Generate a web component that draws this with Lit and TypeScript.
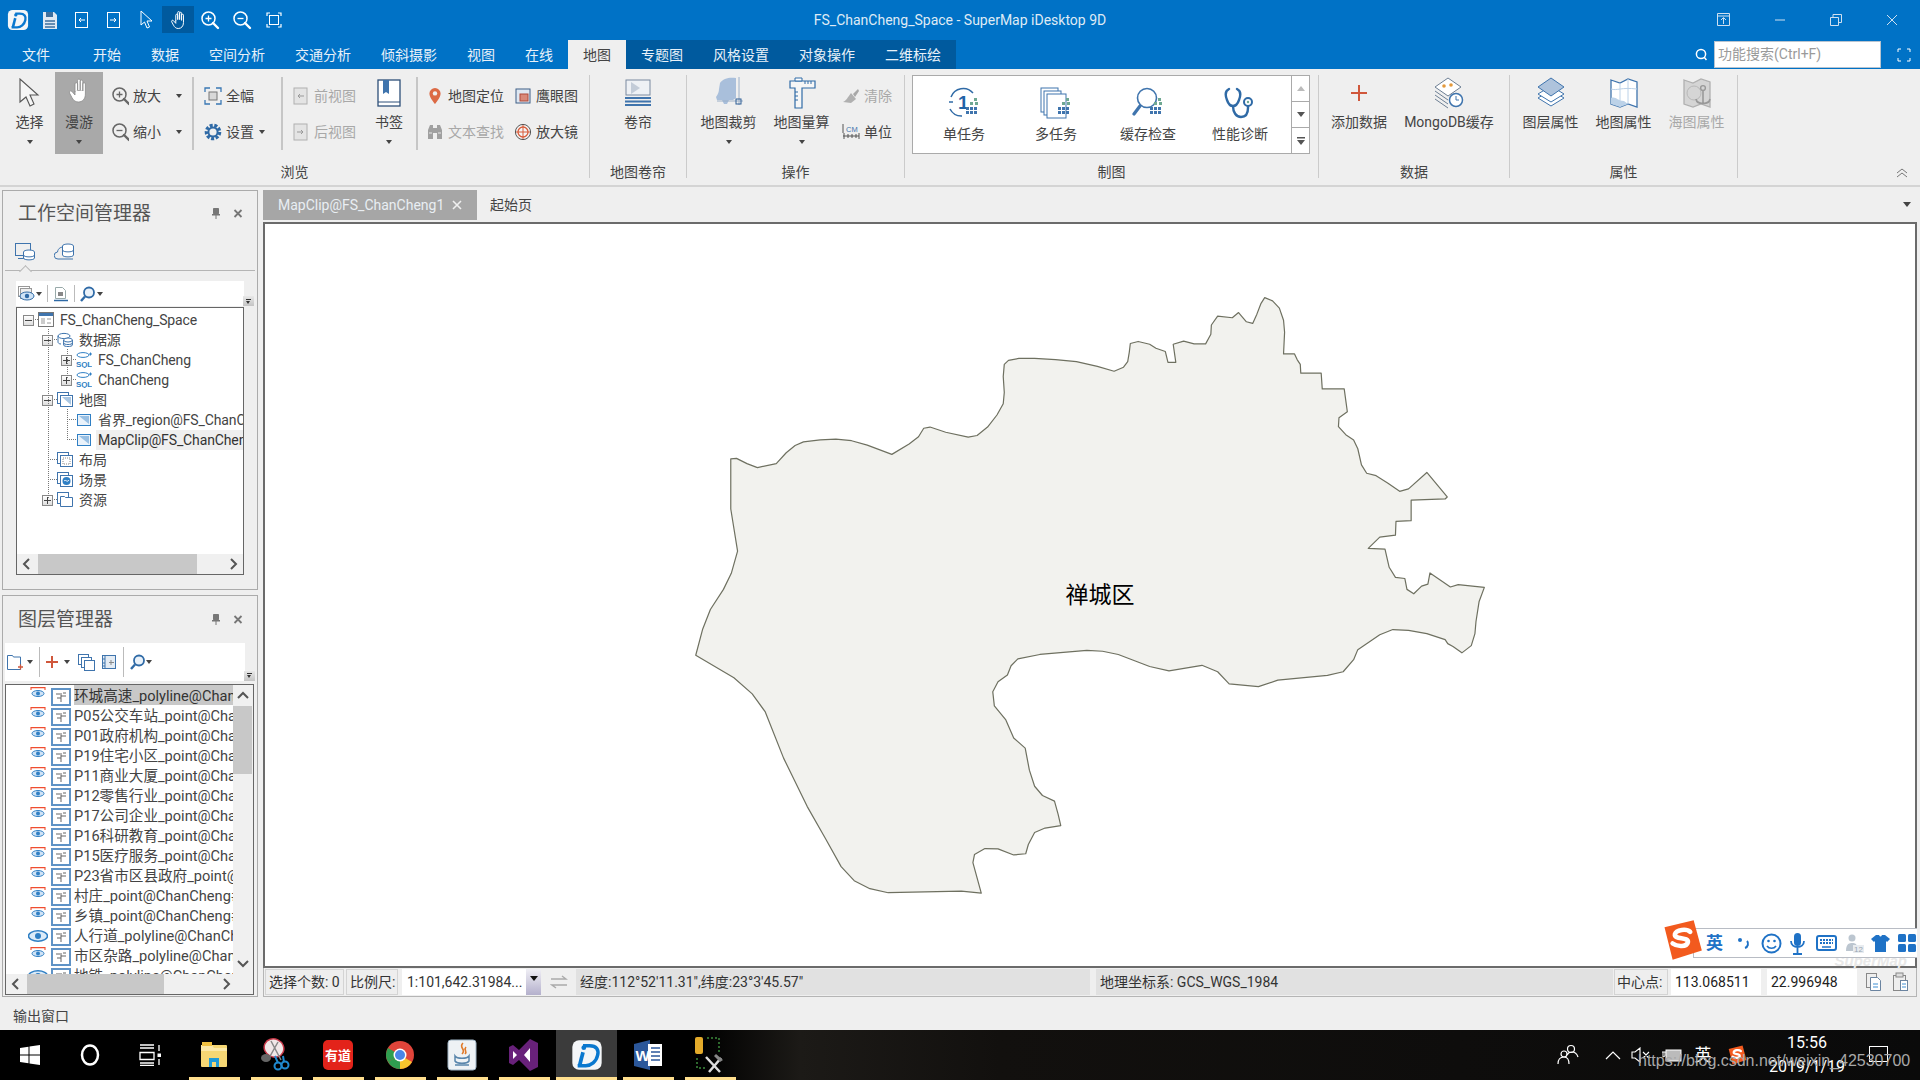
import { LitElement, html, css, svg } from "lit";
import { customElement } from "lit/decorators.js";

const ic = (w: number, h: number, body: unknown) =>
  html`<svg class="ic" width=${w} height=${h} viewBox="0 0 ${w} ${h}">${body}</svg>`;

const B = "#3f74ad";
const handPath =
  "M7 15V7a1.3 1.3 0 0 1 2.6 0v6M9.6 13V3.4a1.3 1.3 0 0 1 2.6 0V13M12.2 13V4.4a1.3 1.3 0 0 1 2.6 0V14M14.8 14V7a1.3 1.3 0 0 1 2.6 0v10c0 5-3 8-7 8-3.5 0-5-2-6.5-4.5L1.5 16c-.8-1.5 1-3 2.4-1.6L7 18V14";

const lens = (c: string, kind: string, w = 20) =>
  ic(w, 20, svg`<circle cx="8.5" cy="8.5" r="6.5" fill="none" stroke=${c} stroke-width="1.5"/>
    <path d="M13 13l5 5" stroke=${c} stroke-width="2.4" stroke-linecap="round"/>
    <path d=${kind === "+" ? "M5.5 8.5h6M8.5 5.5v6" : "M5.5 8.5h6"} stroke=${c} stroke-width="1.3"/>`);

const logo = (size: number) =>
  html`<svg class="ic" width=${size} height=${size} viewBox="0 0 24 24">
    <rect x="1" y="1" width="22" height="22" rx="5" fill="#f4f6f8"/>
    <path d="M9 5h5c5 0 7 3 6 7-1 5-5 8-9 8H5" fill="none" stroke="#0a78cf" stroke-width="2.6"/>
    <path d="M9 10l-2.6 10" stroke="#0a78cf" stroke-width="2.8"/>
    <circle cx="9.6" cy="6.5" r="1.8" fill="#0a78cf"/>
  </svg>`;

const pageArrow = (dir: number) =>
  ic(18, 20, svg`<rect x="2.5" y="2.5" width="12" height="15" fill="none" stroke="#fff"/>
    <path d=${dir < 0 ? "M12 10H6M8 8l-2 2 2 2" : "M5 10h6M9 8l2 2-2 2"} fill="none" stroke="#fff"/>
    <path d=${dir < 0 ? "M0 2v16" : "M17 2v16"} stroke="#0072c6"/>`);

const dots = svg`<g fill="#3f74ad"><rect x="18" y="20" width="3" height="3"/><rect x="22" y="20" width="3" height="3"/><rect x="26" y="20" width="3" height="3"/><rect x="18" y="24" width="3" height="3"/><rect x="22" y="24" width="3" height="3"/><rect x="26" y="24" width="3" height="3"/></g>
  <g fill="#6fa892"><rect x="26" y="11" width="3" height="3"/><rect x="22" y="15" width="3" height="3"/><rect x="27" y="15" width="3" height="3"/></g>`;

const I: Record<string, () => unknown> = {
  select: () => ic(26, 30, svg`<path d="M3 1v23l6-5 4 9 4-2-4-9h8z" fill="#f6f6f6" stroke="#555" stroke-width="1.1"/>`),
  hand: () => ic(22, 32, svg`<path d=${handPath} fill="#fff" stroke="#8a8a8a" stroke-width=".8"/>`),
  full: () => ic(18, 18, svg`<path d="M1 5V1h5M12 1h5v4M17 13v4h-5M6 17H1v-4" fill="none" stroke="#3a78b4" stroke-width="1.3"/><rect x="5" y="5" width="8" height="8" fill="#d8d8d8" stroke="#777"/>`),
  gear: () => ic(18, 18, svg`<circle cx="9" cy="9" r="6.6" fill="none" stroke="#2f6aa6" stroke-width="3.4" stroke-dasharray="3 1.6"/><circle cx="9" cy="9" r="4.6" fill="none" stroke="#2f6aa6" stroke-width="2"/>`),
  prev: () => ic(16, 18, svg`<rect x="1" y="1" width="13" height="16" fill="#e4e4e4" stroke="#b0b0b0"/><path d="M11 9H5M7 7L5 9l2 2" fill="none" stroke="#999"/>`),
  next: () => ic(16, 18, svg`<rect x="1" y="1" width="13" height="16" fill="#e4e4e4" stroke="#b0b0b0"/><path d="M4 9h6M8 7l2 2-2 2" fill="none" stroke="#999"/>`),
  book: () => ic(24, 28, svg`<rect x="1" y="1" width="22" height="26" fill="#fff" stroke="#2d4f78" stroke-width="1.3"/><path d="M1 23h22" stroke="#2d4f78"/><path d="M6 1h6v14l-3-2-3 2z" fill="#3f74ad"/>`),
  pin: () => ic(14, 18, svg`<path d="M7 1a5.6 5.6 0 0 0-5.6 5.6C1.4 11 7 17 7 17s5.6-6 5.6-10.4A5.6 5.6 0 0 0 7 1z" fill="#dc6a45"/><circle cx="7" cy="6.4" r="2.2" fill="#f0f0f0"/>`),
  binoc: () => ic(18, 18, svg`<path d="M2 16V7l2-5h3v14zM11 16V2h3l2 5v9z" fill="#a0a0a0"/><rect x="7" y="5" width="4" height="5" fill="#a0a0a0"/><path d="M3 10h3M12 10h3" stroke="#e8e8e8"/>`),
  eagle: () => ic(16, 16, svg`<rect x="1" y="1" width="14" height="14" fill="#dfe8f2" stroke="#3f5f86"/><rect x="5" y="6" width="8" height="7" fill="#d8897a" stroke="#b04a3a"/>`),
  magn: () => ic(18, 18, svg`<circle cx="9" cy="9" r="7.6" fill="#f4f4f4" stroke="#555"/><circle cx="9" cy="9" r="5" fill="none" stroke="#d85c3a" stroke-width="1.3"/><path d="M9 2v14M2 9h14" stroke="#d85c3a"/>`),
  swipe: () => ic(28, 28, svg`<rect x="2" y="1" width="24" height="15" fill="#eef1f5" stroke="#7a8aa0"/><path d="M7 3l9 6-9 6z" fill="#c3ccd8"/><path d="M1 19h26M1 22.5h26M1 26h26" stroke="#3f74ad" stroke-width="2"/>`),
  clip: () => ic(28, 32, svg`<path d="M5 6C8 1 15 0 21 1v20l-3 2h-4l-2 4H9l-2-4H2l-1-3c2-3 3-5 3-8z" fill="#a9bfdb"/><path d="M24 0v28M2 24h26" stroke="#9cb0c8"/><rect x="21" y="22" width="5" height="5" fill="none" stroke="#2f5f96"/>`),
  ruler: () => ic(28, 32, svg`<path d="M2 4h25v7H14v20H7V11H2z" fill="#f6f6f6" stroke="#2f6aa6" stroke-width="1.2"/><path d="M7 1h7v3H7z" fill="#fff" stroke="#2f6aa6"/><path d="M17 4v3M20 4v3M23 4v3M7 15h3M7 19h3M7 23h3" stroke="#2f6aa6"/>`),
  broom: () => ic(18, 18, svg`<path d="M11 7l5-5 1 2-4 6z" fill="#a8a8a8"/><path d="M9 6l5 6-5 4-8-1c3-1 5-5 8-9z" fill="#b0b0b0"/>`),
  unit: () => ic(18, 18, svg`<path d="M1 13h16M2 10v6M6 11v4M10 11v4M14 11v4M17 10v6M1 1v9" stroke="#555" fill="none"/><text x="4" y="9" font-size="7.5" fill="#3f74ad" font-family="Liberation Sans">CM</text>`),
  task1: () => ic(32, 32, svg`<path d="M3 10A13 13 0 0 1 25 6M2 22a13 13 0 0 0 12 7" fill="none" stroke="#2f6aa6" stroke-width="1.5"/><path d="M1 15h4" stroke="#2f6aa6" stroke-width="1.5"/><text x="10" y="22" font-size="19" font-weight="700" fill="#1f63a8" font-family="Liberation Sans">1</text>${dots}`),
  taskn: () => ic(32, 32, svg`<rect x="1" y="1" width="17" height="24" fill="#fff" stroke="#3f74ad"/><rect x="4" y="4" width="17" height="24" fill="#fff" stroke="#3f74ad"/><rect x="7" y="7" width="19" height="24" fill="#fff" stroke="#3f74ad"/>${dots}`),
  cache: () => ic(32, 32, svg`<circle cx="15" cy="11" r="9.5" fill="#fff" stroke="#3f74ad" stroke-width="1.6"/><path d="M8 19L2 27" stroke="#3f74ad" stroke-width="3.2" stroke-linecap="round"/>${dots}`),
  steth: () => ic(32, 32, svg`<path d="M5 2C1 4 1 8 3 13c1 3 3 6 6 6s5-3 6-6c2-5 2-9-2-11" fill="none" stroke="#2f6aa6" stroke-width="2.4" stroke-linecap="round"/><path d="M9 19c0 6 3 11 8 11s7-4 7-9v-3" fill="none" stroke="#2f6aa6" stroke-width="2.4"/><circle cx="24" cy="15" r="4" fill="#fff" stroke="#2f6aa6" stroke-width="2"/><circle cx="24" cy="15" r="1.2" fill="#6fa892"/>`),
  plus: () => ic(20, 20, svg`<path d="M10 2v16M2 10h16" stroke="#d0573b" stroke-width="2"/>`),
  mongo: () => ic(30, 32, svg`<path d="M14 1l13 9-13 9L1 10z" fill="#fff" stroke="#6d7f94"/><path d="M1 14l13 9M1 18l13 9M1 22l13 9" stroke="#6d7f94"/><circle cx="10" cy="9" r="1.8" fill="#e39a3d"/><circle cx="17" cy="8" r="1.8" fill="#e39a3d"/><circle cx="22" cy="23" r="6.5" fill="#fff" stroke="#3f74ad" stroke-width="1.5"/><path d="M22 19v4h3" fill="none" stroke="#3f74ad"/>`),
  layers: () => ic(30, 32, svg`<path d="M15 21l13-8-13-8-13 8z" transform="translate(0,8)" fill="#fff" stroke="#3f74ad"/><path d="M15 21l13-8-13-8-13 8z" transform="translate(0,4)" fill="#fff" stroke="#3f74ad"/><path d="M15 19L28 10 15 1 2 10z" fill="#aec3dc" stroke="#3f74ad"/>`),
  mapp: () => ic(28, 32, svg`<path d="M1 3l9 3 8-4 9 3v25l-9-3-8 3-9-3z" fill="#fff" stroke="#3f74ad" stroke-width="1.3"/><path d="M1 21c5-2 6 3 13 3l4 3-8 3-9-3z" fill="#bcd2e8"/><path d="M10 6v24M18 2v25" stroke="#bcd2e8"/><path d="M1 12c6 2 10-2 26 0" stroke="#bcd2e8" fill="none"/>`),
  sea: () => ic(28, 32, svg`<path d="M1 3l9 3 8-4 9 3v25l-9-3-8 3-9-3z" fill="#d5d5d5" stroke="#b0b0b0" stroke-width="1.3"/><circle cx="11" cy="16" r="7" fill="none" stroke="#b8b8b8"/><circle cx="20" cy="11" r="2.4" fill="none" stroke="#999" stroke-width="1.4"/><path d="M20 13v14M13 22c1 6 13 6 14 0" fill="none" stroke="#999" stroke-width="1.6"/>`),
};

const trayS = (s: number) => html`<svg class="ic" width=${s} height=${s} viewBox="0 0 36 36">
  <path d="M3 7L28 1l7 26-25 8z" fill="#f25a1e"/>
  <path d="M25 11c-3-3-12-2-13 2-1 5 12 2 11 7-1 4-9 4-13 1" fill="none" stroke="#fff" stroke-width="4" stroke-linecap="round"/>
</svg>`;

const TI: Record<string, unknown> = {
  root: ic(16, 16, svg`<rect x=".5" y=".5" width="15" height="14" fill="#fff" stroke="#777"/><rect x="1" y="1" width="14" height="3" fill="#3f74ad"/><rect x="3" y="6" width="4" height="6" fill="#ccc"/><rect x="9" y="6" width="4" height="2" fill="#ccc"/><rect x="9" y="10" width="4" height="2" fill="#ccc"/>`),
  ds: ic(16, 16, svg`<ellipse cx="7" cy="4" rx="6" ry="2.6" fill="none" stroke=${B}/><path d="M1 4v6c0 1 1 2 3 2" fill="none" stroke=${B}/><ellipse cx="11" cy="8" rx="4.4" ry="2" fill="#fff" stroke=${B}/><path d="M6.6 8v5c0 2 8.8 2 8.8 0V8M6.6 11c0 2 8.8 2 8.8 0" fill="none" stroke=${B}/>`),
  sql: ic(16, 16, svg`<ellipse cx="7" cy="3" rx="6" ry="2.4" fill="none" stroke="#2f7fc4"/><text x="0" y="15" font-size="8" font-weight="700" fill="#2f7fc4" font-family="Liberation Sans">SQL</text><path d="M13 2h3M14.5 .5v3" stroke="#2f7fc4"/>`),
  maps: ic(16, 16, svg`<rect x=".5" y=".5" width="11" height="11" fill="#fff" stroke=${B}/><rect x="3.5" y="3.5" width="12" height="11" fill="#fff" stroke=${B}/><path d="M5 5l9 8V5z" fill="#a9c6e2"/>`),
  map: ic(16, 16, svg`<rect x="1.5" y="2.5" width="13" height="11" fill="#eaf2fa" stroke="#2f7fc4"/><path d="M3 4l10 8V4z" fill="#98bfe3"/>`),
  layout: ic(16, 16, svg`<rect x=".5" y=".5" width="11" height="11" fill="#fff" stroke=${B}/><rect x="3.5" y="3.5" width="12" height="11" fill="#fff" stroke=${B}/><rect x="6" y="6" width="7" height="6" fill="none" stroke="#888" stroke-dasharray="1 1"/>`),
  scene: ic(16, 16, svg`<rect x=".5" y=".5" width="11" height="11" fill="#fff" stroke=${B}/><rect x="3.5" y="3.5" width="12" height="11" fill="#fff" stroke=${B}/><circle cx="9.5" cy="9" r="4" fill="#2f7fc4"/><path d="M7 9c2-2 3 2 5-1" stroke="#fff" fill="none"/>`),
  res: ic(16, 16, svg`<rect x=".5" y=".5" width="11" height="11" fill="#fff" stroke=${B}/><path d="M3.5 14.5v-10h4l1 1h7v9z" fill="#fff" stroke=${B}/>`),
};

const smallEye = html`<svg class="ic" width="16" height="12" viewBox="0 0 16 12">
  <path d="M1 3V.6h14V3" fill="none" stroke="#ef4d2f" stroke-width="1.1"/>
  <ellipse cx="8" cy="6.5" rx="6" ry="3" fill="#cfe3f6" stroke="#2f7fc4"/><circle cx="8" cy="6.5" r="2" fill="#2f7fc4"/></svg>`;
const bigEye = html`<svg class="ic" width="20" height="12" viewBox="0 0 20 12">
  <ellipse cx="10" cy="6" rx="9.5" ry="5.2" fill="#dcebf8" stroke="#2f7fc4" stroke-width="1.5"/><circle cx="10" cy="6" r="3" fill="#2f7fc4"/></svg>`;
const layerIc = ic(20, 18, svg`<rect x="1" y="1" width="18" height="16" fill="#fff" stroke="#5f93c6" stroke-width="2"/><path d="M5 6h4M10 5v9M10 8h5M6 10h4M12 5h3" stroke="#666" fill="none"/>`);

const scrollBtn = (d: string) => html`<svg class="ic" width="10" height="12" viewBox="0 0 10 12"><path d=${d} fill="none" stroke="#555" stroke-width="2"/></svg>`;

const PATH = "M99 445L110 444 130 457 150 467 186 457 205 430 222 412 238 403 270 398 300 396 330 400 360 411 407 434 440 408 458 390 468 369 480 366 510 379 553 391 570 387 590 366 608 336 620 308 622 280 620 240 622 210 630 200 650 195 680 195 720 198 760 203 800 215 832 227 850 217 858 203 861 180 863 158 878 153 900 160 912 170 930 178 935 205 950 205 945 160 965 152 985 159 1007 159 1017 135 1018 112 1030 90 1058 94 1070 81 1085 104 1097 108 1105 85 1113 58 1120 44 1135 52 1148 70 1156 100 1158 130 1156 184 1177 184 1182 198 1188 210 1189 232 1228 232 1230 271 1272 271 1278 328 1262 343 1261 365 1275 385 1290 398 1298 420 1305 460 1315 481 1333 487 1355 505 1378 526 1395 520 1430 479 1469 540 1465 545 1400 548 1400 599 1371 601 1370 635 1340 640 1318 668 1350 670 1358 715 1370 740 1388 743 1392 770 1405 781 1420 762 1432 757 1436 729 1475 764 1490 758 1540 765 1530 800 1524 850 1522 880 1515 910 1497 928 1480 912 1470 905 1465 895 1430 880 1395 872 1365 870 1340 883 1298 920 1290 945 1270 975 1240 984 1145 996 1108 1012 1052 1005 1030 975 1000 959 937 973 900 962 840 932 810 924 780 922 690 932 648 943 635 960 628 983 610 1000 600 1025 603 1060 625 1095 640 1140 662 1165 670 1220 680 1260 695 1283 718 1297 725 1330 730 1358 700 1364 680 1375 668 1405 663 1428 640 1431 610 1416 585 1415 565 1430 562 1450 578 1526 540 1521 400 1525 365 1515 335 1495 310 1460 280 1390 245 1310 200 1190 165 1075 140 1030 105 990 32 934 45 870 60 820 85 770 100 730 112 675 99 570Z";

const TABS = [
  ["文件", "t-file"], ["开始", "t-first"], ["数据", ""], ["空间分析", ""], ["交通分析", ""], ["倾斜摄影", ""], ["视图", ""], ["在线", ""],
  ["地图", "active"], ["专题图", "ctx"], ["风格设置", "ctx"], ["对象操作", "ctx"], ["二维标绘", "ctx"],
];

const TREE = [
  { l: 0, e: "-", i: "root", t: "FS_ChanCheng_Space" },
  { l: 1, e: "-", i: "ds", t: "数据源" },
  { l: 2, e: "+", i: "sql", t: "FS_ChanCheng" },
  { l: 2, e: "+", i: "sql", t: "ChanCheng" },
  { l: 1, e: "-", i: "maps", t: "地图" },
  { l: 2, e: "", i: "map", t: "省界_region@FS_ChanCheng" },
  { l: 2, e: "", i: "map", t: "MapClip@FS_ChanCheng1", sel: true },
  { l: 1, e: "", i: "layout", t: "布局" },
  { l: 1, e: "", i: "scene", t: "场景" },
  { l: 1, e: "+", i: "res", t: "资源" },
];

const LAYERS = [
  "环城高速_polyline@ChanCheng", "P05公交车站_point@ChanCheng", "P01政府机构_point@ChanCheng", "P19住宅小区_point@ChanCheng",
  "P11商业大厦_point@ChanCheng", "P12零售行业_point@ChanCheng", "P17公司企业_point@ChanCheng", "P16科研教育_point@ChanCheng",
  "P15医疗服务_point@ChanCheng", "P23省市区县政府_point@ChanCheng", "村庄_point@ChanCheng#1", "乡镇_point@ChanCheng#1",
  "人行道_polyline@ChanCheng", "市区杂路_polyline@ChanCheng", "地铁_polyline@ChanCheng",
];

@customElement("app-root")
export class AppRoot extends LitElement {
  static styles = css`
    :host { display: flex; flex-direction: column; width: 1920px; height: 1080px; overflow: hidden; background: #efefef; color: #444;
      font: 14px/20px Roboto, "Noto Sans CJK SC", sans-serif; }
    .ic { display: block; flex: none; }
    .titlebar { height: 40px; background: #0072c6; display: grid; grid-template-columns: 1fr auto 1fr; color: #dfeaf5; }
    .qat { display: flex; padding: 6px 0 0 2px; height: 27px; }
    .qcell { width: 32px; height: 27px; display: flex; align-items: center; justify-content: center; }
    .qcell.on { background: #005a9e; }
    .title { line-height: 40px; }
    .win { display: flex; justify-content: flex-end; }
    .wcell { width: 56px; height: 40px; display: flex; align-items: center; justify-content: center; }
    .tabs { height: 29px; background: #0072c6; display: flex; color: #e8f1f9; line-height: 31px; padding-left: 7px; }
    .tab { padding: 0 15px; white-space: nowrap; }
    .tab.t-file { width: 30px; margin-right: 11px; }
    .tab.active { background: #efefef; color: #444; }
    .tab.ctx { background: #005a9e; }
    .search { margin-left: auto; display: flex; align-items: center; height: 29px; }
    .sinput { width: 162px; height: 25px; background: #fff; border: 1px solid #b8c4d0; margin: 0 16px 0 7px; padding-left: 3px; color: #9a9a9a; font-size: 14px; line-height: 25px; white-space: nowrap; }
    .expand { margin-right: 9px; }
    .ribbon { height: 112px; padding-top: 6px; display: flex; background: #efefef; box-shadow: inset 0 -2px 0 #d4d4d4; }
    .group { height: 103px; box-sizing: border-box; border-right: 1px solid #cbcbcb; display: flex; flex-direction: column; }
    .g1 { width: 590px; } .g2 { width: 97px; } .g3 { width: 218px; } .g4 { width: 414px; } .g5 { width: 191px; } .g6 { width: 228px; }
    .gcontent { height: 85px; display: flex; }
    .glabel { height: 12px; line-height: 12px; text-align: center; margin-top: 6px; color: #444; }
    .big { display: flex; flex-direction: column; align-items: center; padding-top: 4px; white-space: nowrap; box-sizing: border-box; flex: none; }
    .slot { height: 27px; display: flex; align-items: center; justify-content: center; }
    .big .lbl { margin-top: 6px; }
    .caret { width: 0; height: 0; border: 3px solid transparent; border-top: 4px solid #444; border-bottom: 0; flex: none; }
    .big .caret { margin-top: 8px; }
    .w-select { width: 55px; padding-left: 4px; } .w-pan { width: 48px; height: 82px; margin-top: -3px; padding-top: 7px; background: #a9a9a9; }
    .w-book { width: 50px; } .w-swipe { width: 96px; } .w-g3 { width: 73px; } .w-add { width: 78px; margin-left: 1px; } .w-mongo { width: 100px; margin-left: 1px; }
    .w-g6 { width: 73px; }
    .g3-start { margin-left: 5px; } .g6-start { margin-left: 4px; }
    .col { padding-top: 3px; flex: none; box-sizing: border-box; }
    .row { height: 36px; display: flex; align-items: center; white-space: nowrap; }
    .s-ic { width: 18px; display: flex; justify-content: center; margin-right: 4px; flex: none; }
    .c-zoom { width: 87px; padding-left: 8px; } .c-full { width: 84px; padding-left: 9px; } .c-view { width: 80px; padding-left: 8px; }
    .c-loc { width: 94px; padding-left: 7px; } .c-eagle { width: 76px; padding-left: 1px; } .c-clear { width: 60px; padding-left: 4px; }
    .cm1 { margin-left: 15px; } .cm2 { margin-left: 5px; }
    .sep { width: 2px; height: 73px; margin: 2px 1px 0 2px; background: #c6c6c6; flex: none; }
    .dis { color: #a8a8a8; }
    .gallery { margin: 0 0 0 7px; width: 398px; height: 79px; box-sizing: border-box; background: #fff; border: 1px solid #aaa; display: flex; padding-left: 5px; }
    .gitem { width: 92px; padding-top: 12px; display: flex; flex-direction: column; align-items: center; }
    .gitem .slot { height: 30px; }
    .gitem .lbl { margin-top: 6px; }
    .gscroll { margin-left: auto; width: 17px; border-left: 1px solid #aaa; display: flex; flex-direction: column; }
    .gbtn { flex: 1; display: flex; align-items: center; justify-content: center; border-bottom: 1px solid #aaa; }
    .gbtn:last-child { border-bottom: 0; }
    .collapse { margin-left: auto; width: 36px; display: flex; justify-content: center; align-self: flex-end; padding-bottom: 9px; }
    .body { height: 810px; display: flex; }
    .side { width: 260px; padding: 3px 0 0 2px; box-sizing: border-box; display: flex; flex-direction: column; gap: 5px; flex: none; }
    .panel { width: 256px; box-sizing: border-box; border: 1px solid #ababab; background: #efefef; position: relative; }
    .wp { height: 400px; } .lp { height: 403px; }
    .phead { display: flex; align-items: center; height: 44px; box-sizing: border-box; padding: 2px 0 0 15px; font-size: 19px; color: #555; }
    .lp .phead { height: 47px; }
    .pbtns { margin-left: auto; display: flex; gap: 12px; padding: 0 14px 2px 0; }
    .ptabs { height: 36px; padding-bottom: 2px; display: flex; gap: 19px; padding-left: 10px; align-items: center; box-sizing: border-box; border-bottom: 1px solid #b5b5b5; margin: 0 2px; position: relative; }
    .ptabs::after { content: ""; position: absolute; left: 16px; bottom: -1px; width: 8px; height: 8px; background: #efefef; border-left: 1px solid #b5b5b5; border-top: 1px solid #b5b5b5; transform: translateY(5px) rotate(45deg); }
    .toolbar { display: flex; align-items: center; background: #fff; position: relative; }
    .tb1 { margin: 10px 0 0 13px; width: 228px; height: 25px; padding-left: 2px; box-sizing: border-box; gap: 1px; }
    .tb2 { margin: 0 0 0 2px; width: 240px; height: 38px; padding-left: 1px; box-sizing: border-box; gap: 3px; }
    .tsep { width: 1px; height: 17px; background: #bbb; margin: 0 4px; }
    .tb2 .tsep { height: 30px; margin: 0 0 0 3px; }
    .sp0 { width: 0; } .sp1 { width: 1px; }
    .mneg { margin-left: -3px; }
    .grip { position: absolute; right: -10px; bottom: 0; width: 11px; height: 10px; background: linear-gradient(#e8e8e8, #c4c4c4); display: flex; align-items: center; justify-content: center; }
    .grip i { width: 5px; height: 4px; border-top: 1px solid #333; display: block; position: relative; }
    .grip i::after { content: ""; position: absolute; left: 0; top: 1px; border: 2.5px solid transparent; border-top: 3px solid #333; }
    .box { border: 1px solid #666; background: #fff; box-sizing: border-box; display: flex; flex-direction: column; overflow: hidden; }
    .tree { margin: 1px 0 0 13px; width: 228px; height: 268px; position: relative; }
    .rows { flex: 1; overflow: hidden; padding-top: 2px; position: relative; }
    .trow { height: 20px; display: flex; align-items: center; white-space: nowrap; color: #444; position: relative; letter-spacing: -0.12px; }
    .exp { width: 11px; height: 11px; box-sizing: border-box; border: 1px solid #888; background: linear-gradient(#fff,#ddd); margin-right: 4px; flex: none; position: relative; }
    .exp::before { content: ""; position: absolute; left: 1px; right: 1px; top: 4px; height: 1px; background: #444; }
    .exp.plus::after { content: ""; position: absolute; top: 1px; bottom: 1px; left: 4px; width: 1px; background: #444; }
    .noexp { width: 15px; flex: none; }
    .ttext { margin-left: 4px; padding-left: 2px; flex: 1; overflow: hidden; }
    .ttext.sel { background: #efefef; color: #333; }
    .lines { position: absolute; left: 0; top: 0; }
    .hbar { height: 20px; background: #f0f0f0; display: flex; align-items: center; justify-content: space-between; padding: 0 5px; position: relative; flex: none; }
    .thumb { position: absolute; top: 0; bottom: 0; background: #c8c8c8; }
    .hthumb1 { left: 21px; width: 159px; } .hthumb2 { left: 21px; width: 137px; }
    .hright { margin-right: 17px; }
    .lbox { margin: 3px 0 0 2px; width: 249px; height: 311px; }
    .lmain { flex: 1; display: flex; overflow: hidden; }
    .lrows { flex: 1; overflow: hidden; }
    .lrow { height: 20px; display: flex; white-space: nowrap; }
    .eye { width: 20px; margin-left: 22px; display: flex; justify-content: center; align-self: flex-start; padding-top: 2px; flex: none; }
    .eye.big { padding-top: 5px; }
    .lic { margin-left: 3px; margin-right: 3px; margin-top: 3px; flex: none; }
    .ltext { flex: 1; overflow: hidden; height: 20px; line-height: 22px; color: #444; font-size: 14.6px; }
    .ltext.sel { background: #c8c8c8; color: #333; }
    .vbar { width: 20px; background: #f0f0f0; display: flex; flex-direction: column; align-items: center; justify-content: space-between; padding: 6px 0; box-sizing: border-box; position: relative; flex: none; }
    .vthumb { position: absolute; left: 0; right: 1px; top: 21px; height: 68px; background: #c8c8c8; }
    .main { width: 1654px; margin-left: 3px; padding-top: 3px; display: flex; flex-direction: column; box-sizing: border-box; }
    .dtabs { height: 32px; display: flex; position: relative; flex: none; }
    .dtab { height: 30px; line-height: 30px; padding: 0 15px; white-space: nowrap; }
    .dtab.on { width: 214px; box-sizing: border-box; background: #a6a6a6; color: #e9eef3; display: flex; justify-content: space-between; align-items: center; }
    .dtab.off { padding-left: 13px; color: #444; }
    .dmenu { margin-left: auto; margin-top: 12px; margin-right: 6px; border: 4px solid transparent; border-top: 5px solid #444; border-bottom: 0; height: 0; width: 0; }
    .frame { height: 746px; border: 2px solid #6b6b6b; box-sizing: border-box; background: #fff; position: relative; flex: none; }
    .mapsvg { position: absolute; left: 414px; top: 56px; }
    .maplabel { position: absolute; left: 800px; top: 356px; width: 70px; text-align: center; font-size: 23px; line-height: 32px; color: #000; white-space: nowrap; }
    .wm { position: absolute; right: 8px; bottom: -2px; color: #e8e8e8; font: italic 700 15px "Liberation Sans", sans-serif; line-height: 14px; }
    .ime { position: absolute; right: -2px; top: 704px; height: 30px; width: 224px; box-sizing: border-box; border: 1px solid #b8bcc4; border-right: 0; background: #fff; display: flex; align-items: center; }
    .imelogo { position: absolute; left: -33px; top: -10px; }
    .imegrid { display: flex; padding-left: 12px; align-items: center; color: #1f72c6; }
    .imech { font-weight: 700; font-size: 17px; width: 28px; }
    .imeic { width: 27.4px; display: flex; justify-content: flex-start; }
    .status { height: 29px; display: flex; align-items: center; padding: 1px 0 2px 1px; box-sizing: border-box; border-bottom: 1px solid #b5b5b5; border-right: 1px solid #b5b5b5; border-left: 1px solid #b5b5b5; flex: none; white-space: nowrap; }
    .scell { height: 26px; box-sizing: border-box; border: 1px solid #d4d4d4; background: #eee; padding: 0 3px; color: #333; flex: none; line-height: 24px; }
    .s1 { width: 79px; margin-right: 2px; } .s2 { width: 52px; margin-right: 4px; }
    .combo { width: 139px; height: 26px; background: #fff; position: relative; padding-left: 5px; box-sizing: border-box; line-height: 26px; color: #333; flex: none; }
    .drop { position: absolute; right: 0; top: 0; bottom: 0; width: 15px; background: linear-gradient(#f0eff5, #b4b0cc); display: flex; align-items: center; justify-content: center; }
    .drop i { border: 4px solid transparent; border-top: 5px solid #111; border-bottom: 0; margin-top: -6px; }
    .swap { width: 35px; display: flex; justify-content: center; flex: none; }
    .field { height: 26px; line-height: 26px; background: #e1e1e1; padding-left: 4px; box-sizing: border-box; color: #333; flex: none; }
    .f1 { width: 514px; margin-right: 6px; } .f2 { width: 517px; margin-right: 1px; padding-left: 4px; }
    .s3 { width: 54px; margin-right: 3px; padding: 0 2px; }
    .white { height: 26px; line-height: 26px; background: #fff; color: #222; padding-left: 4px; box-sizing: border-box; flex: none; }
    .v1 { width: 90px; margin-right: 6px; } .v2 { width: 90px; margin-right: 3px; }
    .copy { width: 27px; display: flex; justify-content: center; flex: none; }
    .output { height: 33px; line-height: 38px; padding-left: 13px; color: #444; background: #efefef; }
    .task { height: 50px; background: linear-gradient(90deg, #000 0 700px, #1c1a17 800px, #12100e 1000px, #0a0a0a 100%); display: flex; position: relative; color: #fff; }
    .tcell { height: 50px; display: flex; align-items: center; justify-content: center; flex: none; position: relative; box-sizing: border-box; }
    .ti { width: 60px; }
    .ti-run { width: 51px; margin: 0 5.5px; }
    .ti-run::after { content: ""; position: absolute; left: 0; right: 0; bottom: 0; height: 3px; background: #ffdf8e; }
    .first-run { margin-left: 8.5px; }
    .ti-act { width: 61px; margin-left: 1px; background: #3b3b3b; }
    .ti-act::after { content: ""; position: absolute; left: 0; right: 0; bottom: 0; height: 3px; background: #ffdf8e; }
    .tray { margin-left: auto; display: flex; align-items: center; height: 50px; padding-right: 31px; }
    .tray-cn { width: 18px; color: #fff; font-size: 17px; text-align: center; white-space: nowrap; }
    .m26 { margin-left: 26px; } .m10 { margin-left: 10px; } .m11 { margin-left: 11px; } .m12 { margin-left: 12px; } .m15 { margin-left: 15px; } .m14 { margin-left: 14px; } .m16 { margin-left: 16px; }
    .clock { width: 92px; text-align: center; font-size: 16px; line-height: 24px; color: #fff; white-space: nowrap; }
    .wmark { position: absolute; left: 1638px; top: 19px; color: #a8a8a8; font: 16px/24px "Liberation Sans", sans-serif; white-space: nowrap; }
  `;

  private big(cls: string, icon: string, label: string, caret = false, dis = false) {
    return html`<div class="big ${cls} ${dis ? "dis" : ""}"><div class="slot">${I[icon]()}</div><div class="lbl">${label}</div>${caret ? html`<span class="caret"></span>` : ""}</div>`;
  }
  private small(icon: unknown, label: string, dis = false, caret = "") {
    return html`<div class="row ${dis ? "dis" : ""}"><span class="s-ic">${icon}</span>${label}${caret ? html`<span class="caret ${caret}"></span>` : ""}</div>`;
  }

  private renderTitle() {
    const white = "#fff";
    return html`<div class="titlebar">
      <div class="qat">
        <div class="qcell">${logo(22)}</div>
        <div class="qcell">${ic(14, 18, svg`<path d="M0 1h11l3 3v14H0z" fill="#dfe9f3"/><rect x="3" y="1" width="7" height="5" fill="#3d6f9e"/><path d="M2 10h10M2 13h10M2 16h10" stroke="#3d6f9e" stroke-width="1.3"/>`)}</div>
        <div class="qcell">${pageArrow(-1)}</div>
        <div class="qcell">${pageArrow(1)}</div>
        <div class="qcell">${ic(14, 20, svg`<path d="M2 1v14l3.5-3 2.5 6 2.5-1-2.5-6h5z" fill="none" stroke=${white}/>`)}</div>
        <div class="qcell on"><svg class="ic" width="16" height="20" viewBox="0 0 20 27"><path d=${handPath} fill="#005a9e" stroke="#fff" stroke-width="1.3"/></svg></div>
        <div class="qcell">${lens(white, "+")}</div>
        <div class="qcell">${lens(white, "-")}</div>
        <div class="qcell">${ic(16, 16, svg`<path d="M1 4V1h3M12 1h3v3M15 12v3h-3M4 15H1v-3" fill="none" stroke=${white} stroke-width="1.2"/><rect x="3.5" y="3.5" width="9" height="9" fill="none" stroke=${white}/>`)}</div>
      </div>
      <div class="title">FS_ChanCheng_Space - SuperMap iDesktop 9D</div>
      <div class="win">
        <div class="wcell">${ic(14, 14, svg`<path d="M.5 .5h12v12H.5zM.5 3h12M6.5 11V5M4 7l2.5-2.5L9 7" fill="none" stroke="#cfe0f0"/>`)}</div>
        <div class="wcell">${ic(12, 12, svg`<path d="M1 6h10" stroke="#cfe0f0"/>`)}</div>
        <div class="wcell">${ic(12, 12, svg`<path d="M.5 3.5h8v8h-8zM3 3.5V.5h8.5v8H8.5" fill="none" stroke="#cfe0f0"/>`)}</div>
        <div class="wcell">${ic(12, 12, svg`<path d="M1 1l10 10M11 1L1 11" stroke="#cfe0f0"/>`)}</div>
      </div>
    </div>`;
  }

  private renderTabs() {
    return html`<div class="tabs">
      ${TABS.map(([t, c]) => html`<div class="tab ${c}">${t}</div>`)}
      <div class="search">
        ${ic(12, 14, svg`<circle cx="6" cy="6" r="4.6" fill="none" stroke="#fff" stroke-width="1.5"/><path d="M9 9l2.5 3" stroke="#fff" stroke-width="1.5"/>`)}
        <div class="sinput">功能搜索(Ctrl+F)</div>
        <div class="expand">${ic(14, 14, svg`<path d="M1 4V1h3M10 1h3v3M13 10v3h-3M4 13H1v-3" fill="none" stroke="#fff"/>`)}</div>
      </div>
    </div>`;
  }

  private renderRibbon() {
    const sep = html`<div class="sep"></div>`;
    return html`<div class="ribbon">
      <div class="group g1">
        <div class="gcontent">
          ${this.big("w-select", "select", "选择", true)}
          ${this.big("w-pan", "hand", "漫游", true)}
          <div class="col c-zoom">
            ${this.small(lens("#666", "+", 18), "放大", false, "cm1")}
            ${this.small(lens("#666", "-", 18), "缩小", false, "cm1")}
          </div>
          ${sep}
          <div class="col c-full">
            ${this.small(I.full(), "全幅")}
            ${this.small(I.gear(), "设置", false, "cm2")}
          </div>
          ${sep}
          <div class="col c-view">
            ${this.small(I.prev(), "前视图", true)}
            ${this.small(I.next(), "后视图", true)}
          </div>
          ${this.big("w-book", "book", "书签", true)}
          ${sep}
          <div class="col c-loc">
            ${this.small(I.pin(), "地图定位")}
            ${this.small(I.binoc(), "文本查找", true)}
          </div>
          <div class="col c-eagle">
            ${this.small(I.eagle(), "鹰眼图")}
            ${this.small(I.magn(), "放大镜")}
          </div>
        </div>
        <div class="glabel">浏览</div>
      </div>
      <div class="group g2">
        <div class="gcontent">${this.big("w-swipe", "swipe", "卷帘")}</div>
        <div class="glabel">地图卷帘</div>
      </div>
      <div class="group g3">
        <div class="gcontent">
          <div class="g3-start">${this.big("w-g3", "clip", "地图裁剪", true)}</div>
          ${this.big("w-g3", "ruler", "地图量算", true)}
          <div class="col c-clear">
            ${this.small(I.broom(), "清除", true)}
            ${this.small(I.unit(), "单位")}
          </div>
        </div>
        <div class="glabel">操作</div>
      </div>
      <div class="group g4">
        <div class="gcontent">
          <div class="gallery">
            ${[["task1", "单任务"], ["taskn", "多任务"], ["cache", "缓存检查"], ["steth", "性能诊断"]].map(
              ([i, t]) => html`<div class="gitem"><div class="slot">${I[i]()}</div><div class="lbl">${t}</div></div>`
            )}
            <div class="gscroll">
              <div class="gbtn">${ic(8, 6, svg`<path d="M4 0l4 5H0z" fill="#bbb"/>`)}</div>
              <div class="gbtn">${ic(8, 6, svg`<path d="M0 0h8L4 5z" fill="#555"/>`)}</div>
              <div class="gbtn">${ic(8, 8, svg`<path d="M0 0h8v1.5H0zM0 3h8L4 8z" fill="#555"/>`)}</div>
            </div>
          </div>
        </div>
        <div class="glabel">制图</div>
      </div>
      <div class="group g5">
        <div class="gcontent">${this.big("w-add", "plus", "添加数据")}${this.big("w-mongo", "mongo", "MongoDB缓存")}</div>
        <div class="glabel">数据</div>
      </div>
      <div class="group g6">
        <div class="gcontent">
          <div class="g6-start">${this.big("w-g6", "layers", "图层属性")}</div>
          ${this.big("w-g6", "mapp", "地图属性")}
          ${this.big("w-g6", "sea", "海图属性", false, true)}
        </div>
        <div class="glabel">属性</div>
      </div>
      <div class="collapse">${ic(12, 10, svg`<path d="M1 5l5-4 5 4M1 9l5-4 5 4" fill="none" stroke="#777"/>`)}</div>
    </div>`;
  }

  private phead(t: string) {
    return html`<div class="phead">${t}
      <div class="pbtns">
        ${ic(10, 11, svg`<path d="M2.5 .5h5v5L9 7H1l1.5-1.5zM5 7v4" fill="#777" stroke="#777"/>`)}
        ${ic(10, 11, svg`<path d="M1.5 2l7 7M8.5 2l-7 7" stroke="#777" stroke-width="1.8"/>`)}
      </div>
    </div>`;
  }

  private renderWorkspace() {
    return html`<div class="panel wp">
      ${this.phead("工作空间管理器")}
      <div class="ptabs">
        ${ic(20, 18, svg`<rect x=".5" y=".5" width="15" height="12" fill="none" stroke=${B}/><path d="M3 15.5h8" stroke=${B}/><ellipse cx="14" cy="9" rx="5.5" ry="2" fill="#fff" stroke=${B}/><path d="M8.5 9v6c0 2.5 11 2.5 11 0V9" fill="#fff" stroke=${B}/><path d="M8.5 12c0 2.5 11 2.5 11 0" fill="none" stroke=${B}/>`)}
        ${ic(20, 18, svg`<path d="M6 16H4a3.5 3.5 0 0 1-.5-7C4 5 8 3 10 5" fill="none" stroke=${B}/><path d="M6 16h13" stroke=${B}/><ellipse cx="14" cy="3" rx="5.5" ry="2" fill="#fff" stroke=${B}/><path d="M8.5 3v9c0 2.5 11 2.5 11 0V3M8.5 7c0 2.5 11 2.5 11 0" fill="#fff" stroke=${B}/>`)}
      </div>
      <div class="toolbar tb1">
        ${ic(17, 16, svg`<rect x=".5" y=".5" width="11" height="10" fill="none" stroke="#999"/><rect x="2.5" y="2.5" width="11" height="10" fill="#eee" stroke="#999"/><ellipse cx="9" cy="10" rx="7" ry="4" fill="#cfe3f6" stroke="#2f6aa6"/><circle cx="9" cy="10" r="2.2" fill="#2f6aa6"/>`)}
        <span class="caret"></span><span class="tsep"></span>
        ${ic(16, 16, svg`<path d="M2.5 1.5h7l3 3v8h-10z" fill="#fff" stroke="#9aa"/><rect x="5" y="6" width="5" height="4" fill="#888"/><path d="M1 14.5h14" stroke="#2f6aa6" stroke-width="1.5"/>`)}
        <span class="tsep"></span>
        ${ic(16, 16, svg`<circle cx="9" cy="6.5" r="5" fill="#eaf2fa" stroke="#2f6aa6" stroke-width="1.8"/><path d="M5 10.5L1 15" stroke="#2f6aa6" stroke-width="2.4"/>`)}
        <span class="caret"></span>
        <div class="grip"><i></i></div>
      </div>
      <div class="box tree">
        <div class="rows">
          ${TREE.map(
            (r) => html`<div class="trow" style="padding-left:${6 + 19 * r.l}px">
              ${r.e ? html`<span class="exp ${r.e === "+" ? "plus" : ""}"></span>` : html`<span class="noexp"></span>`}
              ${TI[r.i]}
              <span class="ttext ${r.sel ? "sel" : ""}">${r.t}</span>
            </div>`
          )}
          <svg class="lines" width="226" height="246" viewBox="17 309 226 246" fill="none" stroke="#777" stroke-dasharray="1 1">
            <path d="M48.5 330V500M67.5 350V380M67.5 410V440M35 320.5h3M54 340.5h4M73 360.5h4M73 380.5h4M54 400.5h4M67 420.5h10M67 440.5h10M48 460.5h10M48 480.5h10M54 500.5h4"/>
          </svg>
        </div>
        <div class="hbar">
          <div class="thumb hthumb1"></div>
          ${scrollBtn("M7 1L2 6l5 5")}${scrollBtn("M3 1l5 5-5 5")}
        </div>
      </div>
    </div>`;
  }

  private renderLayers() {
    return html`<div class="panel lp">
      ${this.phead("图层管理器")}
      <div class="toolbar tb2">
        ${ic(18, 18, svg`<path d="M1.5 16.5v-14h5l1 1.5h7v12.5z" fill="#fff" stroke=${B}/><path d="M12 14h5M14.5 11.5v5" stroke="#d0573b" stroke-width="1.3"/>`)}
        <span class="caret"></span><span class="tsep"></span>
        ${ic(18, 18, svg`<path d="M9 3v12M3 9h12" stroke="#d0573b" stroke-width="2"/>`)}
        <span class="caret"></span><span class="sp1"></span>
        ${ic(18, 18, svg`<rect x="1.5" y="1.5" width="10" height="10" fill="#fff" stroke=${B}/><rect x="4.5" y="4.5" width="10" height="10" fill="#fff" stroke=${B}/><rect x="7.5" y="7.5" width="10" height="10" fill="#fff" stroke=${B}/>`)}
        <span class="sp0"></span>
        ${ic(16, 16, svg`<rect x="1.5" y="1.5" width="13" height="13" fill="#e4ecf4" stroke=${B}/><path d="M4 1v14M1 5h3M1 9h3M1 12h3" stroke=${B}/><path d="M10 6v5M8 8.5h5" stroke="#888"/>`)}
        <span class="tsep"></span><span class="sp0"></span>
        ${ic(16, 16, svg`<circle cx="9" cy="6.5" r="5" fill="#eaf2fa" stroke="#2f6aa6" stroke-width="1.8"/><path d="M5 10.5L1 15" stroke="#2f6aa6" stroke-width="2.4"/>`)}
        <span class="caret mneg"></span>
        <div class="grip"><i></i></div>
      </div>
      <div class="box lbox">
        <div class="lmain">
          <div class="lrows">
            ${LAYERS.map(
              (t, i) => html`<div class="lrow">
                <span class="eye ${i === 12 || i === 14 ? "big" : ""}">${i === 12 || i === 14 ? bigEye : smallEye}</span>
                <span class="lic">${layerIc}</span>
                <span class="ltext ${i === 0 ? "sel" : ""}">${t}</span>
              </div>`
            )}
          </div>
          <div class="vbar">
            <div class="vthumb"></div>
            ${ic(12, 8, svg`<path d="M1 7l5-5 5 5" fill="none" stroke="#555" stroke-width="2"/>`)}
            ${ic(12, 8, svg`<path d="M1 1l5 5 5-5" fill="none" stroke="#555" stroke-width="2"/>`)}
          </div>
        </div>
        <div class="hbar">
          <div class="thumb hthumb2"></div>
          ${scrollBtn("M7 1L2 6l5 5")}
          <span class="hright">${scrollBtn("M3 1l5 5-5 5")}</span>
        </div>
      </div>
    </div>`;
  }

  private renderMain() {
    return html`<div class="main">
      <div class="dtabs">
        <div class="dtab on">MapClip@FS_ChanCheng1 ${ic(10, 10, svg`<path d="M1 1l8 8M9 1L1 9" stroke="#f0f0f0" stroke-width="1.6"/>`)}</div>
        <div class="dtab off">起始页</div>
        <div class="dmenu"></div>
      </div>
      <div class="frame">
        <svg class="mapsvg" width="820" height="630" viewBox="0 0 1568 1568" preserveAspectRatio="none">
          <path d=${PATH} fill="#f2f2ee" stroke="#6e7060" stroke-width="1.2" vector-effect="non-scaling-stroke" stroke-linejoin="round"/>
        </svg>
        <div class="maplabel">禅城区</div>
        <div class="wm">SuperMap</div>
        <div class="ime">
          <div class="imelogo">${trayS(42)}</div>
          <div class="imegrid">
            <span class="imech">英</span>
            <span class="imeic">${ic(18, 20, svg`<circle cx="6" cy="7" r="2" fill="#1f72c6"/><path d="M13 8c2 2 1 6-2 7" fill="none" stroke="#1f72c6" stroke-width="2"/>`)}</span>
            <span class="imeic">${ic(21, 21, svg`<circle cx="10.5" cy="10.5" r="9" fill="none" stroke="#1f72c6" stroke-width="2"/><circle cx="7.5" cy="8" r="1.3" fill="#1f72c6"/><circle cx="13.5" cy="8" r="1.3" fill="#1f72c6"/><path d="M6 13c2 3 7 3 9 0" fill="none" stroke="#1f72c6" stroke-width="1.6"/>`)}</span>
            <span class="imeic">${ic(17, 23, svg`<rect x="5" y="1" width="7" height="13" rx="3.5" fill="#1f72c6"/><path d="M2 9c0 8 13 8 13 0M8.5 16v5M4 22h9" fill="none" stroke="#1f72c6" stroke-width="1.8"/>`)}</span>
            <span class="imeic">${ic(21, 18, svg`<rect x="1" y="2" width="19" height="14" rx="2" fill="none" stroke="#1f72c6" stroke-width="2"/><path d="M4 6h13M4 9h13" stroke="#1f72c6" stroke-width="1.8" stroke-dasharray="2 1"/><path d="M6 13h9" stroke="#1f72c6" stroke-width="1.5"/>`)}</span>
            <span class="imeic">${ic(21, 21, svg`<circle cx="8" cy="5" r="3.5" fill="#bcc6d0"/><path d="M2 18c0-8 4-8 6-8s4 0 5 3v5z" fill="#bcc6d0"/><rect x="9" y="12" width="11" height="8" fill="#e8ecf0"/><text x="10" y="19" font-size="8" fill="#9aa6b2" font-family="Liberation Sans">12</text>`)}</span>
            <span class="imeic">${ic(19, 19, svg`<path d="M5 1h3c1 2 2 2 3 0h3l5 4-3 3-1-1v11H4V7L3 8 0 5z" fill="#1f72c6"/>`)}</span>
            <span class="imeic">${ic(18, 18, svg`<g fill="#1f72c6"><rect x="0" y="0" width="8" height="8" rx="1.5"/><rect x="10" y="0" width="8" height="8" rx="1.5"/><rect x="0" y="10" width="8" height="8" rx="1.5"/><rect x="10" y="10" width="8" height="8" rx="1.5"/></g>`)}</span>
          </div>
        </div>
      </div>
      <div class="status">
        <div class="scell s1">选择个数: 0</div>
        <div class="scell s2">比例尺:</div>
        <div class="combo">1:101,642.31984...<div class="drop"><i></i></div></div>
        <div class="swap">${ic(18, 14, svg`<path d="M1 4h15l-4-3M17 10H2l4 3" fill="none" stroke="#aaa" stroke-width="1.4"/>`)}</div>
        <div class="field f1">经度:112°52'11.31",纬度:23°3'45.57"</div>
        <div class="field f2">地理坐标系: GCS_WGS_1984</div>
        <div class="scell s3">中心点:</div>
        <div class="white v1">113.068511</div>
        <div class="white v2">22.996948</div>
        <div class="copy">${ic(17, 20, svg`<rect x="1.5" y="1.5" width="10" height="14" fill="#eee" stroke="#888"/><path d="M5.5 5.5h7l3 3v10h-10z" fill="#fff" stroke="#6b84a0"/><path d="M8 12h5M8 15h5" stroke="#3f8fd4"/>`)}</div>
        <div class="copy">${ic(17, 20, svg`<rect x="1.5" y="3.5" width="12" height="15" fill="#eee" stroke="#888"/><rect x="4" y="1" width="7" height="4" fill="#ddd" stroke="#888"/><rect x="8.5" y="8.5" width="7" height="10" fill="#fff" stroke="#6b84a0"/><path d="M10 12h4M10 15h4" stroke="#3f8fd4"/>`)}</div>
      </div>
    </div>`;
  }

  private renderTask() {
    return html`<div class="task">
      <div class="tcell ti">${ic(20, 20, svg`<path d="M0 3l8.5-1.2V9.5H0zM9.5 1.6L20 0v9.5H9.5zM0 10.500h8.500v7.700L0 17zM9.500 10.500H20V20L9.500 18.400z" fill="#fff"/>`)}</div>
      <div class="tcell ti">${ic(20, 22, svg`<ellipse cx="10" cy="11" rx="8" ry="9.5" fill="none" stroke="#fff" stroke-width="2.5"/>`)}</div>
      <div class="tcell ti">${ic(22, 22, svg`<path d="M1 1h14M1 4h14M1 8.5h14v7H1zM1 19h14M1 21.5h14M20 1v6M20 15v6" stroke="#fff" fill="none" stroke-width="1.3"/><rect x="18.5" y="9.5" width="3.5" height="3.5" fill="#fff"/>`)}</div>
      <div class="tcell ti-run first-run">${ic(28, 26, svg`<rect x="1" y="3" width="26" height="22" rx="1" fill="#f6d774"/><path d="M1 3h11l2 3h13v3H1z" fill="#fce9a8"/><rect x="2" y="0" width="10" height="4" fill="#f0c040"/><path d="M9 25v-9h10v9h-3v-5h-4v5z" fill="#1f9bd8"/>`)}</div>
      <div class="tcell ti-run">${ic(30, 34, svg`<ellipse cx="13" cy="10" rx="10" ry="9" transform="rotate(25 13 10)" fill="#f0e8e8" stroke="#c83a4a" stroke-width="1.5"/><path d="M8 20L17 4M20 22L10 3" stroke="#888" stroke-width="1.5"/><ellipse cx="5" cy="20" rx="5" ry="4" fill="#666"/><circle cx="17" cy="28" r="3.5" fill="none" stroke="#1f8ad0" stroke-width="2"/><circle cx="24" cy="27" r="3.5" fill="none" stroke="#1f8ad0" stroke-width="2"/><path d="M14 18l3 7M22 18l1 6" stroke="#1f8ad0" stroke-width="2"/>`)}</div>
      <div class="tcell ti-run"><svg class="ic" width="30" height="30" viewBox="0 0 30 30"><rect x="0" y="0" width="30" height="30" rx="5" fill="#e3231a"/><text x="15" y="20" text-anchor="middle" font-size="13" font-weight="700" fill="#fff" font-family="Noto Sans CJK SC">有道</text></svg></div>
      <div class="tcell ti-run">${ic(28, 28, svg`<circle cx="14" cy="14" r="14" fill="#e0443a"/><path d="M14 14L26 21A14 14 0 0 1 14 28z" fill="#f7c52d"/><path d="M14 14V28A14 14 0 0 1 2 21z" fill="#2f9e4f"/><path d="M14 14L2 21A14 14 0 0 1 2 7z" fill="#2f9e4f"/><circle cx="14" cy="14" r="6.5" fill="#fff"/><circle cx="14" cy="14" r="5" fill="#4a86e8"/>`)}</div>
      <div class="tcell ti-run">${ic(30, 32, svg`<rect x="1" y="1" width="28" height="30" rx="3" fill="#eef2f5" stroke="#9fb4c4"/><path d="M16 4c-5 5 4 6-1 11M19 8c-3 3 2 4-1 7" fill="none" stroke="#e07a2a" stroke-width="1.6"/><path d="M8 17c2 3 12 3 14 0v5c-2 3-12 3-14 0zM8 26h14" fill="none" stroke="#5a86ac" stroke-width="1.5"/>`)}</div>
      <div class="tcell ti-run">${ic(30, 34, svg`<path d="M21 1l8 4v24l-8 4-11-11-6 5-4-2V9l4-2 6 5z" fill="#68217a"/><path d="M21 10l-6 7 6 7zM4 13v8l4-4z" fill="#fff"/>`)}</div>
      <div class="tcell ti-act">${logo(32)}</div>
      <div class="tcell ti-run">${ic(28, 30, svg`<path d="M16 0L0 4v22l16 4z" fill="#2b579a"/><rect x="14" y="4" width="14" height="22" fill="#fff"/><path d="M17 8h9M17 12h9M17 16h9M17 20h9" stroke="#2b579a" stroke-width="1.5"/><text x="1.5" y="21" font-size="15" font-weight="700" fill="#fff" font-family="Liberation Sans">W</text>`)}</div>
      <div class="tcell ti-run">${ic(32, 38, svg`<rect x="1" y="1" width="8" height="17" rx="2" fill="#e3aa2a"/><path d="M13 2h12v16M3 22v10h10" fill="none" stroke="#3d8a3d" stroke-dasharray="2 2" stroke-width="1.5"/><path d="M12 21l14 15M27 22L15 36" stroke="#ddd" stroke-width="2.5"/><path d="M22 18l7 6-3 2-6-6z" fill="#888"/>`)}</div>
      <div class="tray">
        ${ic(22, 22, svg`<circle cx="14" cy="5" r="3.5" fill="none" stroke="#fff" stroke-width="1.2"/><circle cx="7" cy="10" r="3" fill="none" stroke="#fff" stroke-width="1.2"/><path d="M1 20c0-6 3-7 6-7s5 2 5 7M10 11c1-2 3-3 5-3 3 0 5 2 6 5" fill="none" stroke="#fff" stroke-width="1.2"/>`)}
        <span class="m26">${ic(16, 10, svg`<path d="M1 9l7-7 7 7" fill="none" stroke="#fff" stroke-width="1.2"/>`)}</span>
        <span class="m10">${ic(20, 16, svg`<path d="M1 5h3l5-4v14l-5-4H1zM12 5l6 6M18 5l-6 6" fill="none" stroke="#fff" stroke-width="1.1"/>`)}</span>
        <span class="m11">${ic(20, 16, svg`<rect x="4" y="3" width="15" height="11" fill="#bbb" stroke="#fff"/><path d="M3 5v4l-2 1V5M0 5h4" stroke="#fff" fill="none"/>`)}</span>
        <span class="tray-cn m12">英</span>
        <span class="m15">${trayS(20)}</span>
        <div class="clock m14">15:56<br />2019/1/19</div>
        <span class="m16">${ic(20, 18, svg`<rect x=".5" y=".5" width="18" height="15" fill="none" stroke="#fff"/>`)}</span>
      </div>
      <div class="wmark">https://blog.csdn.net/weixin_42530700</div>
    </div>`;
  }

  render() {
    return html`
      ${this.renderTitle()}
      ${this.renderTabs()}
      ${this.renderRibbon()}
      <div class="body">
        <div class="side">${this.renderWorkspace()}${this.renderLayers()}</div>
        ${this.renderMain()}
      </div>
      <div class="output">输出窗口</div>
      ${this.renderTask()}
    `;
  }
}
